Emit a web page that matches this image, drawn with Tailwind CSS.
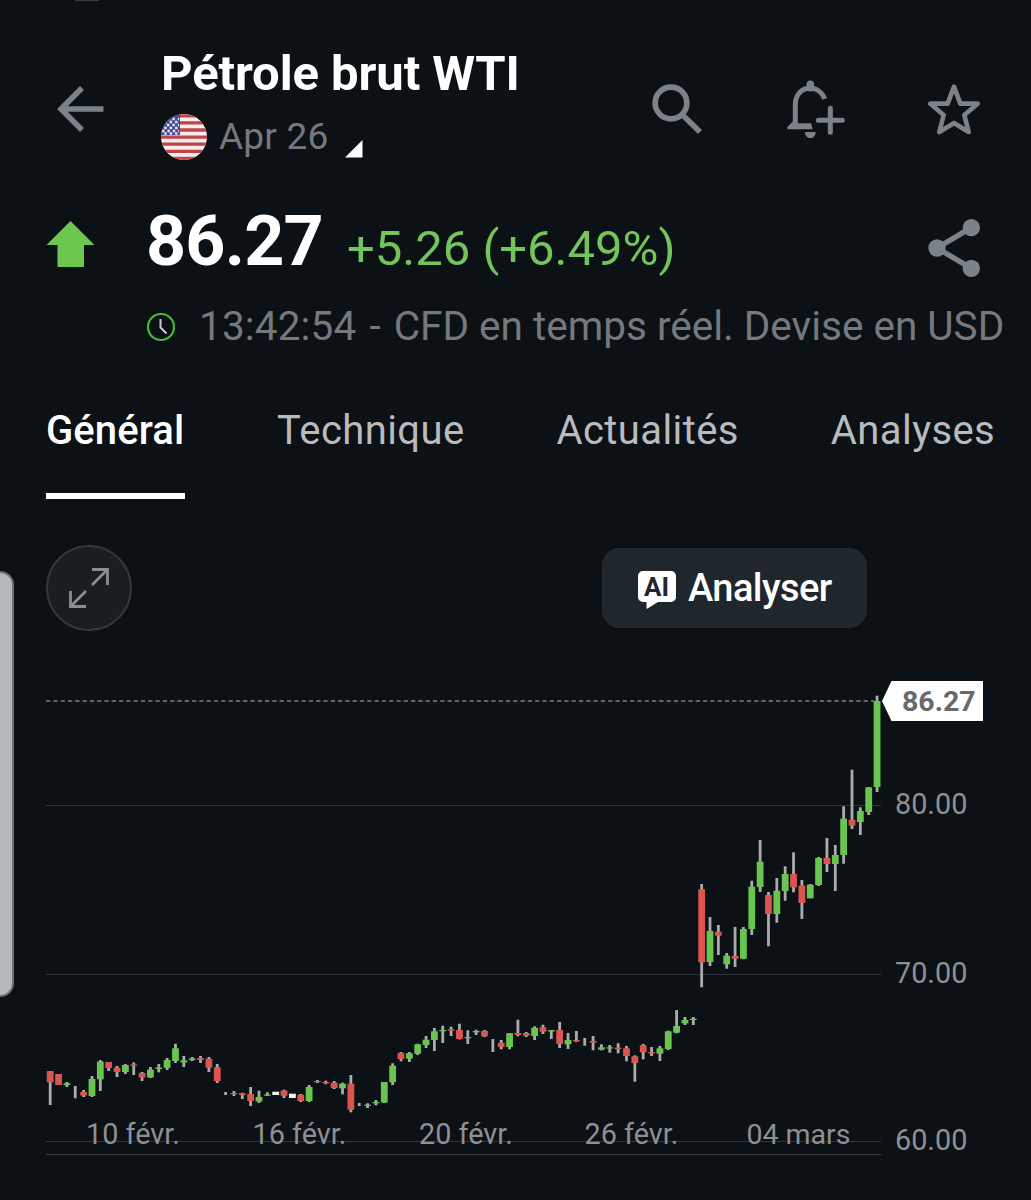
<!DOCTYPE html>
<html lang="fr">
<head>
    <meta charset="UTF-8">
    <meta name="viewport" content="width=device-width, initial-scale=1.0">
    <title>Pétrole brut WTI</title>
    <script src="https://cdn.jsdelivr.net/npm/@tailwindcss/browser@4"></script>
</head>
<body class="bg-[#0b1115] font-['Roboto',sans-serif] text-white">
    <div class="relative w-[1031px] h-[1200px] overflow-hidden">
        <!-- Status bar remnant and edge panel handle -->
        <div class="absolute left-[75px] top-0 w-6 h-px bg-[#3a3d40]"></div>
        <div class="absolute -left-5 top-[571px] w-[34px] h-[426px] rounded-[14px] bg-[#b6b7b9] border-2 border-[#6f7173]"></div>

        <!-- Header -->
        <header class="mt-[46px] h-[126px] flex items-center pl-[57px] pr-[51.5px] text-[#7b8288]">
            <svg class="w-12 h-12" viewBox="0 0 48 48" fill="none" stroke="currentColor" stroke-width="5.6">
                <path d="M46.500 24H4M25 3 4 24l21 21"/>
            </svg>
            <div class="self-start ml-14 w-[400px]">
                <h1 class="text-[49px] leading-[56px] font-bold text-white whitespace-nowrap tracking-[-0.1px]">Pétrole brut WTI</h1>
                <div class="mt-3 h-[46px] flex items-center">
                    <svg class="w-[46px] h-[46px]" viewBox="0 0 46 46">
                        <defs><clipPath id="disc"><circle cx="23" cy="23" r="23"/></clipPath></defs>
                        <g clip-path="url(#disc)">
                            <rect width="46" height="46" fill="#f7eeee"/>
                            <path d="M0 1.800h46M0 8.900h46M0 16h46M0 23.100h46M0 30.200h46M0 37.300h46M0 44.400h46" stroke="#c4434a" stroke-width="3.300"/>
                            <rect width="19" height="21" fill="#414a94"/>
                            <g stroke="#e6e7f2" stroke-width="2.400" stroke-dasharray="2.400 3">
                                <path d="M6 5h12M3.300 8h15M6 11h12M3.300 14h15M1 17h17M3.300 19.500h15"/>
                            </g>
                        </g>
                    </svg>
                    <span class="ml-3 text-[37px] leading-[46px] tracking-[0.2px] text-[#75797e]">Apr 26</span>
                    <svg class="ml-[17px] mt-[23px] w-[18px] h-[18px]" viewBox="0 0 18 18"><path d="M17.500 0v17.500H0z" fill="#fff"/></svg>
                </div>
            </div>
            <svg class="ml-auto w-[51px] h-[51px]" viewBox="155 99 153 153" fill="none" stroke="currentColor" stroke-width="17">
                <circle cx="212" cy="156" r="47.500"/>
                <path d="m250 195 49 48"/>
            </svg>
            <svg class="ml-[84px] w-[58px] h-[59px]" viewBox="560 91 174 177" fill="none" stroke="currentColor" stroke-width="15">
                <path d="M585 224v-59c0-29 18-49 44-49 20 0 37 12 44 32"/>
                <path d="M630 104v10" stroke-width="23" stroke-linecap="round"/>
                <path d="M561 239v-7l17-17 8 6h46l5 18zM614 247h32c0 24-32 24-32 0z" fill="currentColor" stroke="none"/>
                <path d="M690 176v72M654 212h72" stroke-linecap="round"/>
            </svg>
            <svg class="ml-[83px] w-[52px] h-[52px]" viewBox="982 98 156 156" fill="none" stroke="currentColor" stroke-width="14" stroke-linejoin="round">
                <path d="m1060 109 19 51h52l-40 34 13 51-44-27-44 27 13-51-40-34h52z"/>
            </svg>
        </header>

        <!-- Price -->
        <section class="mt-9 h-20 flex items-center pl-[46px] pr-[51.5px]">
            <svg class="-mt-2 w-12 h-[46px]" viewBox="0 0 48 46"><path d="M24.500 0 48.500 24H38v22H11.500V24H.5z" fill="#6cc74f"/></svg>
            <div class="ml-[52px] mb-[7px] flex items-baseline whitespace-nowrap">
                <span class="w-[176px] text-[70px] leading-[80px] font-bold tracking-[-0.8px]">86.27</span>
                <span class="ml-[25px] text-[49px] leading-[80px] text-[#73c45c]">+5.26 (+6.49%)</span>
            </div>
            <svg class="ml-auto w-[52px] h-[58px] text-[#7b8288]" viewBox="982 507 156 174" fill="currentColor">
                <path d="M1112 533 1009 594l103 61" fill="none" stroke="currentColor" stroke-width="16"/>
                <circle cx="1112" cy="533" r="26"/>
                <circle cx="1009" cy="594" r="26"/>
                <circle cx="1112" cy="655" r="26"/>
            </svg>
        </section>
        <div class="mt-[14px] h-12 flex items-center pl-[146px] whitespace-nowrap">
            <svg class="mt-px w-[30px] h-[30px]" viewBox="0 0 30 30" fill="none">
                <circle cx="15" cy="15" r="13" stroke="#48b93c" stroke-width="2.200"/>
                <path d="M14.500 7v8.500l6 6" stroke="#c9cbcd" stroke-width="2"/>
            </svg>
            <span class="ml-[23px] text-[40.5px] leading-[48px] text-[#75797e]"><span class="tracking-[0.15px]">13:42:54</span> <span class="px-[3px]">-</span> CFD en temps réel. Devise en USD</span>
        </div>

        <!-- Tabs -->
        <nav class="mt-[57px] h-[92px] flex gap-[92px] pl-[46px] text-[40px] leading-[48px] tracking-[0.4px] text-[#b9bbbf] whitespace-nowrap">
            <a class="w-[139px] border-b-6 border-white font-medium tracking-[0.1px] text-white">Général</a>
            <a>Technique</a>
            <a>Actualités</a>
            <a>Analyses</a>
        </nav>

        <!-- Chart actions -->
        <div class="mt-[46px] h-[86px] flex items-center justify-between pl-[46px] pr-[164px]">
            <button class="w-[86px] h-[86px] rounded-full bg-[#191e23] border-2 border-[#34393e] flex items-center justify-center">
                <svg class="w-[42px] h-[42px]" viewBox="0 0 42 42" fill="none" stroke="#8b8d8f" stroke-width="2.800">
                    <path d="M24 2.500h15.500V18M39 3 24 18M2.500 24v15.500H18M3 39l15-15"/>
                </svg>
            </button>
            <button class="w-[265px] h-20 rounded-[18px] bg-[#20272c] flex items-center pl-9">
                <svg class="mt-[3px] w-[38px] h-[38px]" viewBox="0 0 38 38">
                    <path d="M5 0h28a5 5 0 0 1 5 5v21a5 5 0 0 1-5 5H20L9.500 37.500Q8.500 38 8.500 37v-6H5a5 5 0 0 1-5-5V5a5 5 0 0 1 5-5z" fill="#fff"/>
                    <text x="18.500" y="25" text-anchor="middle" font-size="26" font-weight="700" textLength="25" lengthAdjust="spacingAndGlyphs" fill="#20262c">AI</text>
                </svg>
                <span class="ml-3 text-[38px] leading-[46px] font-medium tracking-[-0.55px]">Analyser</span>
            </button>
        </div>

        <!-- Candlestick chart -->
        <svg class="mt-[29px] block w-[1031px] h-[540px]" viewBox="0 660 1031 540">
            <path d="M46 805.500h835M46 974.500h835M46 1141.500h835" stroke="#30353a"/>
            <path d="M46 1154.500h835" stroke="#3b4044"/>
            <path d="M46 701h828" stroke="#7d8082" stroke-width="1.300" stroke-dasharray="4.300 3"/>
            <g id="candles"></g>
            <path d="M882 701l9.500-20H983v40h-91.500z" fill="#fff"/>
            <text x="902" y="711" font-size="28.500" font-weight="700" fill="#67696b">86.27</text>
            <g font-size="28.800" fill="#8e9093">
                <text x="895" y="814">80.00</text>
                <text x="895" y="983">70.00</text>
                <text x="895" y="1150">60.00</text>
                <text x="86" y="1144">10 févr.</text>
                <text x="252.500" y="1144">16 févr.</text>
                <text x="419" y="1144">20 févr.</text>
                <text x="584.500" y="1144">26 févr.</text>
                <text x="746.500" y="1144" font-size="28.500">04 mars</text>
            </g>
        </svg>
    </div>

    <script>
        // [high, low, body top, body bottom, kind] in chart units; kind: g up, r down, w flat, n wick only
        const candles = [
            [1071, 1105, 1071, 1082.3, 'r'], [1074, 1085, 1074, 1085, 'r'], [1082, 1087, 1083.3, 1085, 'g'], [1086, 1098.3, 0, 0, 'n'],
            [1090, 1097, 1092, 1095.5, 'r'], [1076, 1097, 1079, 1096, 'g'], [1060, 1091, 1061.5, 1079.3, 'g'], [1062, 1071, 1062, 1068, 'r'],
            [1066, 1077, 1067.7, 1072, 'r'], [1064, 1074, 1065, 1072, 'g'], [1062.5, 1075, 1064.5, 1065.8, 'r'], [1072, 1081, 1073, 1077.5, 'r'],
            [1067, 1078, 1069.5, 1077.5, 'g'], [1064, 1072.3, 1067.5, 1069, 'g'], [1058, 1070, 1060, 1067.8, 'g'], [1043.7, 1063, 1048.3, 1061, 'g'],
            [1056, 1067, 1060.3, 1062.5, 'g'], [1057, 1061, 1058.5, 1060, 'g'], [1056, 1063, 1058.2, 1060, 'r'], [1057, 1072, 1058.7, 1067.7, 'r'],
            [1064, 1083, 1067.3, 1081, 'r'], [1092, 1095, 0, 0, 'n'], [1091, 1096, 1093, 1094.2, 'r'], [1092.7, 1099, 1093.3, 1095, 'r'],
            [1087, 1106, 1094, 1101, 'r'], [1090.7, 1103, 1097, 1101.5, 'g'], [1092.3, 1096, 1094.5, 1095.7, 'g'], [1092, 1095, 1091.7, 1095, 'w'],
            [1089.7, 1098, 1090.5, 1095.7, 'r'], [1094, 1098, 1093.7, 1098, 'w'], [1094, 1102, 1094.7, 1101, 'r'], [1085, 1102, 1087, 1101, 'g'],
            [1080, 1083, 1081, 1082.2, 'r'], [1080.7, 1084.3, 1082, 1083.2, 'r'], [1081, 1089, 1082.7, 1088, 'r'], [1082.7, 1094.3, 1083.7, 1088.3, 'g'],
            [1075, 1112.3, 1083.7, 1109.7, 'r'], [1103, 1106, 0, 0, 'n'], [1103.3, 1108, 1104.7, 1105.9, 'g'], [1100, 1105.3, 1102, 1103.3, 'g'],
            [1082, 1103, 1082, 1102.5, 'g'], [1063.3, 1085, 1065.7, 1082.3, 'g'], [1052, 1061.3, 1053, 1059, 'r'], [1052, 1062, 1053.3, 1058.7, 'g'],
            [1043.7, 1055, 1044.3, 1053.7, 'g'], [1036, 1048, 1039.7, 1045, 'g'], [1028, 1051, 1031.3, 1040, 'g'], [1025.7, 1043, 1030, 1031.3, 'g'],
            [1026.7, 1036, 1029.3, 1030.7, 'r'], [1023.7, 1039.5, 1030, 1039, 'r'], [1030.3, 1044, 1037, 1038.2, 'g'], [1029.7, 1035, 1031, 1032.3, 'g'],
            [1030, 1037, 1031, 1036.3, 'r'], [1039, 1052, 0, 0, 'n'], [1040, 1049.3, 1042.7, 1047, 'r'], [1033, 1049.3, 1033.3, 1047, 'g'],
            [1019.7, 1036.3, 1033, 1035, 'r'], [1032, 1037, 1033, 1035.7, 'r'], [1026.3, 1040, 1027.7, 1036, 'g'], [1024.7, 1034, 1027.3, 1031.7, 'r'],
            [1030, 1039, 1030, 1031.5, 'g'], [1022, 1048, 1030, 1044, 'r'], [1033, 1049, 1040, 1044.3, 'g'], [1031, 1042, 1040, 1041.3, 'r'],
            [1038, 1045.7, 0, 0, 'n'], [1036, 1050.3, 1041, 1042.7, 'r'], [1044.3, 1050.3, 1047.3, 1049.7, 'g'], [1045, 1052.7, 1047.3, 1048.5, 'g'],
            [1043.3, 1053.3, 1047.7, 1049, 'r'], [1046, 1061.3, 1048.3, 1056, 'r'], [1055.3, 1081.7, 1056.3, 1063, 'r'], [1044, 1059.3, 1045.3, 1052.3, 'r'],
            [1047, 1056, 1052, 1053.3, 'r'], [1046, 1061, 1048.3, 1053.7, 'g'], [1030.7, 1050, 1031.3, 1049, 'g'], [1010, 1033.3, 1026, 1032.7, 'g'],
            [1017, 1025, 1020, 1023.3, 'g'], [1017, 1025, 1018.7, 1020, 'g'], [884, 987.3, 889.3, 962.3, 'r'], [917, 966, 931, 962, 'g'],
            [925, 955, 931.7, 935.7, 'r'], [953, 968.7, 955.7, 964.3, 'g'], [927, 967, 956, 958.7, 'r'], [927, 959.3, 929, 958.7, 'g'],
            [880.7, 935, 886.7, 929, 'g'], [840, 892, 861.7, 887, 'g'], [892, 946.3, 895, 914, 'r'], [878, 922.7, 890.7, 914, 'g'],
            [866.3, 900.7, 874, 891, 'g'], [852.3, 892.3, 874, 887.3, 'r'], [880, 919, 885.7, 903, 'r'], [884, 898.3, 884.7, 898.3, 'g'],
            [857, 886, 858, 885, 'g'], [838, 872, 858, 864, 'r'], [845, 891, 855, 864, 'g'], [806.3, 863.7, 818.7, 855, 'g'],
            [769.7, 829, 819.7, 825.7, 'r'], [807.3, 835, 811, 822, 'g'], [787, 815, 787.3, 812, 'g'], [695.7, 792, 701, 787, 'g']
        ];
        const colors = { g: '#69c450', r: '#dc5450', w: '#f4f4f4' };
        const group = document.getElementById('candles');

        function addRect(x, y, width, height, fill) {
            const rect = document.createElementNS('http://www.w3.org/2000/svg', 'rect');
            rect.setAttribute('x', x);
            rect.setAttribute('y', y);
            rect.setAttribute('width', width);
            rect.setAttribute('height', height);
            rect.setAttribute('fill', fill);
            group.appendChild(rect);
        }

        candles.forEach(([high, low, top, bottom, kind], i) => {
            const x = 50.2 + i * 8.352;
            addRect(x - 1.4, high, 2.8, low - high, '#a9abad');
            if (kind !== 'n') addRect(x - 3.4, top, 6.8, bottom - top, colors[kind]);
        });
    </script>
</body>
</html>
